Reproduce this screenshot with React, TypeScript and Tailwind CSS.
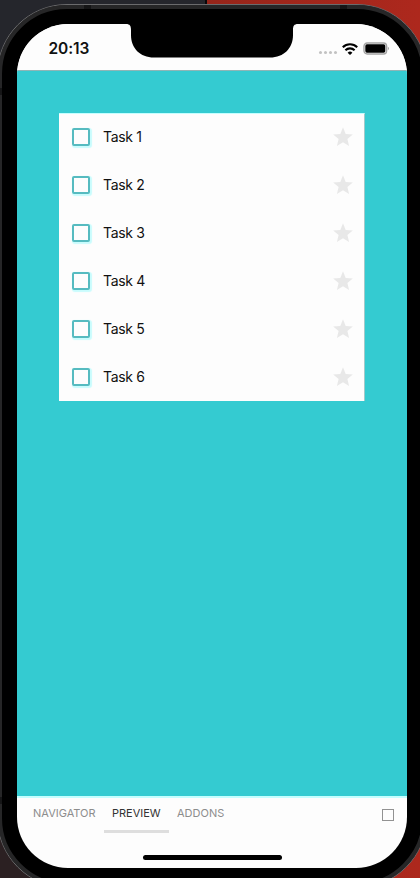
const tasks = ['Task 1', 'Task 2', 'Task 3', 'Task 4', 'Task 5', 'Task 6'];

function Star() {
  return (
    <svg className="h-5 w-5 shrink-0" viewBox="0 0 20 20" fill="#e8e8e8">
      <path d="M10 0.3 12.7 6.9 19.8 7.4 14.4 12 16.1 18.9 10 15.2 3.9 18.9 5.6 12 0.2 7.4 7.3 6.9Z" />
    </svg>
  );
}

function Notch() {
  return (
    <svg className="absolute top-0 left-[109px] h-[34px] w-[172px]" viewBox="0 0 172 34">
      <path d="M0 0C4 0 5 2 5 6V11C5 24 14 33.5 28 33.5H144C158 33.5 167 24 167 11V6C167 2 168 0 172 0Z" fill="#000" />
    </svg>
  );
}

function StatusBar() {
  return (
    <div className="relative flex h-[47px] shrink-0 items-start justify-between border-b border-[#8fb5b6] bg-[#fdfdfd] pr-[17px] pl-[31.5px]">
      <span className="mt-[15px] text-[15.5px] leading-[20px] font-semibold tracking-[-0.1px] text-[#111]">20:13</span>
      <Notch />
      <div className="mt-[16px] flex h-4 items-center">
        <div className="mt-[9px] mr-[5px] flex gap-[2px]">
          {[0, 1, 2, 3].map((n) => (
            <span key={n} className="h-[3px] w-[3px] rounded-full bg-[#c2c2c2]" />
          ))}
        </div>
        <svg className="mt-px mr-[6px] h-3 w-4" viewBox="0 0 16 12" fill="none" stroke="#000" strokeWidth="2.1">
          <path d="M0.8 4.3A10.2 10.2 0 0 1 15.2 4.3" />
          <path d="M3.4 7.3A6.5 6.5 0 0 1 12.6 7.3" />
          <path d="M8 12 5.6 9.7A3.4 3.4 0 0 1 10.4 9.7Z" fill="#000" stroke="none" />
        </svg>
        <svg className="-ml-px h-[13px] w-[27px]" viewBox="0 0 27 13">
          <rect x="1" y="1" width="22.6" height="11" rx="3.2" fill="#fdfdfd" stroke="#a3a3a3" strokeWidth="1.4" />
          <rect x="2.3" y="2.3" width="20" height="8.4" rx="1.6" fill="#000" />
          <path d="M24.8 4.7C26.4 5.3 26.4 7.7 24.8 8.3Z" fill="#a3a3a3" />
        </svg>
      </div>
    </div>
  );
}

export default function App() {
  return (
    <div className="h-[878px] w-[420px] overflow-hidden bg-[linear-gradient(to_right,#25262c_0,#25262c_205px,#08080a_205px,#08080a_207px,#96251a_207px,#ad281d_420px)] font-['Inter','Liberation_Sans',sans-serif]">
      <div className="h-[888px] bg-[linear-gradient(to_bottom,transparent_0,transparent_780px,#2b2022_800px)] [background-size:205px_100%] bg-no-repeat pt-1">
        <div className="-ml-[3px] h-[884px] w-[430px] rounded-[70px] border border-[#6b6b6d] bg-[#262627]">
          <div className="relative h-full rounded-[69px] border-4 border-[#262627] bg-black p-[15px]">
            <span className="absolute -top-1 left-[82px] h-1 w-[7px] bg-[#151516]" />
            <span className="absolute -top-1 left-[338px] h-1 w-[7px] bg-[#151516]" />
            <span className="absolute top-[79px] -left-1 h-[7px] w-1 bg-[#151516]" />
            <span className="absolute top-[788px] -left-1 h-[7px] w-1 bg-[#151516]" />
            <div className="flex h-[844px] w-[390px] flex-col overflow-hidden rounded-[51px] bg-[#fdfdfd]">
              <StatusBar />
              <main className="flex-1 bg-[#34cbd1] px-[42px] pt-[42px]">
                <div className="border-t border-r border-t-[#c5ffff] border-r-[#a1c9ca] bg-[#fdfdfd]">
                  {tasks.map((task, i) => (
                    <div key={task} className={i === 0 ? 'flex h-[47px] items-center pr-[11px] pb-px pl-[13px]' : 'flex h-12 items-center pr-[11px] pl-[13px]'}>
                      <span className="h-[18px] w-[18px] shrink-0 rounded-[2px] border-2 border-[#56bbc0] bg-[#fdfdfd] shadow-[1px_1px_1px_1px_#c9fcfd]" />
                      <span className="ml-[13px] flex-1 text-[14px] leading-5 tracking-[-0.32px] text-[#111]">{task}</span>
                      <Star />
                    </div>
                  ))}
                </div>
              </main>
              <footer className="flex h-[72px] shrink-0 flex-col items-center border-t-2 border-[#c5ffff]">
                <div className="flex w-full items-start pr-[13px] pl-2 text-[11px] leading-[31px] text-[#8d8d8d]">
                  <span className="h-[35px] w-[79px] pl-2">NAVIGATOR</span>
                  <span className="h-[35px] w-[65px] border-b-[3px] border-[#dedede] pl-2 text-[#333]">PREVIEW</span>
                  <span className="h-[35px] flex-1 pl-2">ADDONS</span>
                  <span className="mt-[11px] h-3 w-3 border border-[#929292]" />
                </div>
                <div className="mt-[22px] h-[5px] w-[139px] rounded-full bg-black" />
              </footer>
            </div>
          </div>
        </div>
      </div>
    </div>
  );
}
